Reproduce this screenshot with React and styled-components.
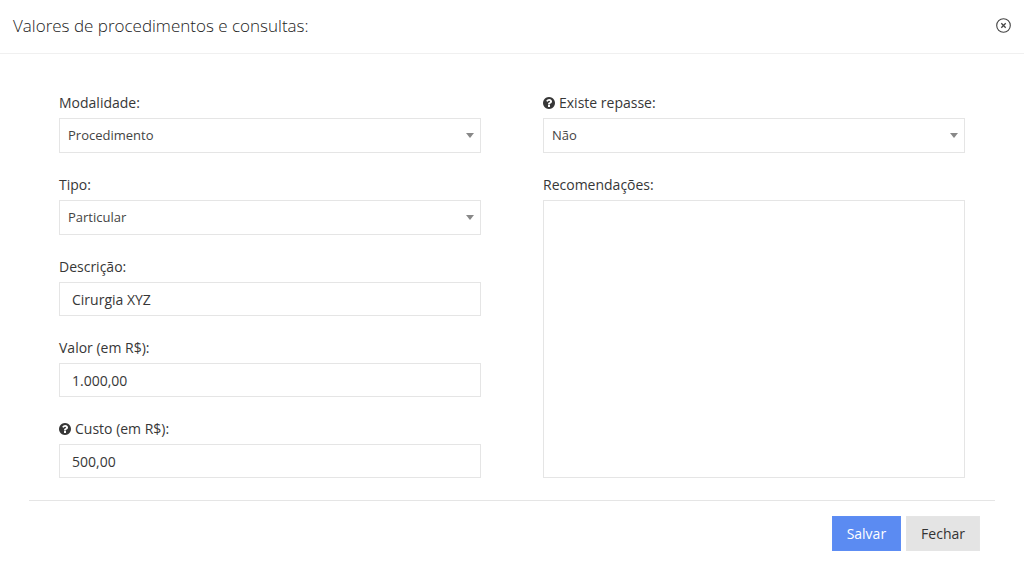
import React, { useId } from "react";
import styled, { createGlobalStyle, css } from "styled-components";

const GlobalStyle = createGlobalStyle`
  *, *::before, *::after { box-sizing: border-box; }
  body {
    margin: 0;
    background: #fff;
    color: #373737;
    font-family: "Open Sans", "Noto Sans", sans-serif;
    font-size: 14px;
    line-height: 20px;
  }
  button, input, select, textarea { font: inherit; color: inherit; }
`;

const Header = styled.header`
  display: flex;
  align-items: center;
  justify-content: space-between;
  height: 54px;
  padding: 0 12px 2px 13px;
  border-bottom: 1px solid #f0f0f0;
`;

const Title = styled.h1`
  margin: 0;
  font-size: 17px;
  font-weight: 300;
  line-height: 24px;
  color: #222;
`;

const CloseButton = styled.button`
  display: flex;
  padding: 0;
  border: 0;
  background: none;
  color: #444;
  cursor: pointer;
`;

const Form = styled.form`
  padding: 39px 29px 28px;
`;

const Columns = styled.div`
  display: grid;
  grid-template-columns: 1fr 1fr;
  column-gap: 62px;
  padding: 0 30px 22px;
`;

const Column = styled.div`
  display: flex;
  flex-direction: column;
  gap: 22px;
`;

const Field = styled.div`
  display: flex;
  flex-direction: column;
  gap: 5px;
  flex: ${({ $fill }) => ($fill ? "1" : "none")};
`;

const Label = styled.label`
  display: flex;
  align-items: center;
  gap: 4px;
`;

const box = css`
  width: 100%;
  border: 1px solid #e5e5e5;
  border-radius: 0;
  background: #fff;
  outline: 0;
`;

const TextInput = styled.input`
  ${box}
  height: 34px;
  padding: 0 12px;
`;

const TextArea = styled.textarea`
  ${box}
  flex: 1;
  padding: 8px 12px;
  resize: none;
`;

const SelectWrap = styled.div`
  position: relative;
`;

const Select = styled.select`
  ${box}
  display: block;
  height: 35px;
  padding: 0 24px 2px 8px;
  appearance: none;
  font-size: 13px;
  color: #444;
`;

const Arrow = styled.svg`
  position: absolute;
  top: 15px;
  right: 7px;
  pointer-events: none;
`;

const Footer = styled.footer`
  display: flex;
  justify-content: flex-end;
  gap: 5px;
  padding: 15px 15px 0;
  border-top: 1px solid #e5e5e5;
`;

const Button = styled.button`
  height: 35px;
  padding: 0 14px;
  border: 1px solid ${({ $primary }) => ($primary ? "#5d8df4" : "#e5e5e5")};
  background: ${({ $primary }) => ($primary ? "#5b8bf2" : "#e4e4e4")};
  color: ${({ $primary }) => ($primary ? "#fff" : "#333")};
  cursor: pointer;
`;

const HelpIcon = () => (
  <svg width="12" height="12" viewBox="0 128 1536 1536" fill="currentColor" aria-hidden="true">
    <path d="M896 1376v-192q0-14-9-23t-23-9H672q-14 0-23 9t-9 23v192q0 14 9 23t23 9h192q14 0 23-9t9-23zm256-672q0-88-55.500-163T958 425t-170-41q-243 0-371 213-15 24 8 42l132 100q7 6 19 6 16 0 25-12 53-68 86-92 34-24 86-24 48 0 85.500 26t37.500 59q0 38-20 61t-68 45q-63 28-115.500 86.500T640 1020v36q0 14 9 23t23 9h192q14 0 23-9t9-23q0-19 21.500-49.500T972 957q32-18 49-28.500t46-35 44.500-48 28-60.500T1152 704zm384 192q0 209-103 385.500T1153.500 1561 768 1664t-385.500-103T103 1281.500 0 896t103-385.500T382.500 231 768 128t385.500 103T1433 510.500 1536 896z" />
  </svg>
);

const CloseIcon = () => (
  <svg width="17" height="17" viewBox="0 0 17 17" fill="none" stroke="currentColor" aria-hidden="true">
    <circle cx="8.500" cy="8.500" r="6.800" strokeWidth="1.100" />
    <path d="M6.300 6.300l4.400 4.400M10.700 6.300l-4.400 4.400" strokeWidth="1.300" />
  </svg>
);

function SelectField({ label, help, options }) {
  const id = useId();
  return (
    <Field>
      <Label htmlFor={id}>{help && <HelpIcon />}{label}</Label>
      <SelectWrap>
        <Select id={id} defaultValue={options[0]}>
          {options.map((o) => <option key={o}>{o}</option>)}
        </Select>
        <Arrow width="8" height="5" viewBox="0 0 8 5" aria-hidden="true">
          <path d="M0 0h8L4 5z" fill="#888" />
        </Arrow>
      </SelectWrap>
    </Field>
  );
}

function InputField({ label, help, value }) {
  const id = useId();
  return (
    <Field>
      <Label htmlFor={id}>{help && <HelpIcon />}{label}</Label>
      <TextInput id={id} type="text" defaultValue={value} />
    </Field>
  );
}

export default function App() {
  return (
    <>
      <GlobalStyle />
      <Header>
        <Title>Valores de procedimentos e consultas:</Title>
        <CloseButton type="button" aria-label="Fechar janela"><CloseIcon /></CloseButton>
      </Header>
      <Form onSubmit={(e) => e.preventDefault()}>
        <Columns>
          <Column>
            <SelectField label="Modalidade:" options={["Procedimento"]} />
            <SelectField label="Tipo:" options={["Particular"]} />
            <InputField label="Descrição:" value="Cirurgia XYZ" />
            <InputField label="Valor (em R$):" value="1.000,00" />
            <InputField label="Custo (em R$):" help value="500,00" />
          </Column>
          <Column>
            <SelectField label="Existe repasse:" help options={["Não"]} />
            <Field $fill>
              <Label htmlFor="recomendacoes">Recomendações:</Label>
              <TextArea id="recomendacoes" />
            </Field>
          </Column>
        </Columns>
        <Footer>
          <Button type="submit" $primary>Salvar</Button>
          <Button type="button">Fechar</Button>
        </Footer>
      </Form>
    </>
  );
}
